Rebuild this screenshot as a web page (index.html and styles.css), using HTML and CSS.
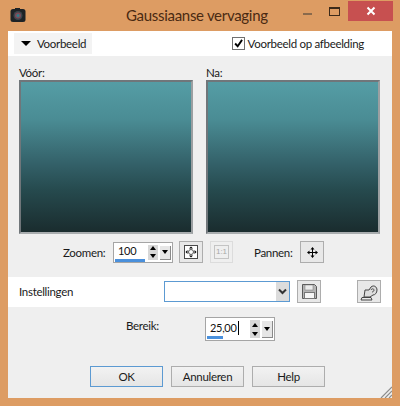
FILE: index.html
```html
<!DOCTYPE html>
<html lang="nl">
<head>
    <meta charset="UTF-8">
    <title>Gaussiaanse vervaging</title>
    <link rel="stylesheet" href="styles.css">
</head>
<body>
    <div class="window">
        <header class="titlebar">
            <svg class="app-icon" width="16" height="16" viewBox="0 0 16 16">
                <rect x="0.5" y="2" width="15" height="13" rx="2.5" fill="#1d2226"/>
                <rect x="5" y="1" width="5" height="2" fill="#1d2226"/>
                <circle cx="8" cy="8.5" r="4.5" fill="#3c454c"/>
                <circle cx="8" cy="8.5" r="3" fill="#7b4a58"/>
                <circle cx="8" cy="8.5" r="1.5" fill="#2f7c8c"/>
            </svg>
            <div class="title">Gaussiaanse vervaging</div>
            <div class="window-controls">
                <div class="win-btn"><span class="min-glyph"></span></div>
                <div class="win-btn"><span class="max-glyph"></span></div>
                <div class="win-close">
                    <svg width="10" height="10" viewBox="0 0 10 10"><path d="M1.5 1.5l7 7M8.5 1.5l-7 7" stroke="#fff" stroke-width="2"/></svg>
                </div>
            </div>
        </header>

        <main class="client">
            <div class="toolbar">
                <div class="section-toggle"><span class="arrow-down"></span>Voorbeeld</div>
                <label class="check-label">
                    <span class="checkbox">
                        <svg width="13" height="13" viewBox="0 0 13 13"><path d="M2.5 6.5l3 3.2 5.2-7.5" fill="none" stroke="#000" stroke-width="2.2"/></svg>
                    </span>
                    Voorbeeld op afbeelding
                </label>
            </div>

            <div class="previews">
                <div class="preview">
                    <div class="preview-label">Vóór:</div>
                    <div class="preview-frame"></div>
                </div>
                <div class="preview">
                    <div class="preview-label">Na:</div>
                    <div class="preview-frame"></div>
                </div>
            </div>

            <div class="zoom-row">
                <span class="zoom-label">Zoomen:</span>
                <div class="spin zoom-spin">
                    <span class="spin-value">100</span>
                    <span class="spin-bar zoom-bar"></span>
                    <span class="spin-arrows"><i class="tri-up"></i><i class="tri-down"></i></span>
                    <span class="spin-menu"><i class="tri-down"></i></span>
                </div>
                <button class="icon-btn fit-btn">
                    <svg width="16" height="16" viewBox="0 0 16 16">
                        <rect x="1.500" y="1.500" width="13" height="13" fill="#fff" stroke="#4a4a4a"/>
                        <circle cx="8" cy="8" r="2.500" fill="none" stroke="#555"/>
                        <path d="M8 2.500l2 2H6zM8 13.500l2-2H6zM2.500 8l2-2v4zM13.500 8l-2-2v4z" fill="#000"/>
                    </svg>
                </button>
                <button class="icon-btn one-btn"><span class="one-glyph">1:1</span></button>
                <span class="pan-label">Pannen:</span>
                <button class="icon-btn pan-btn">
                    <svg width="11" height="11" viewBox="0 0 11 11">
                        <path d="M5.5 0l2 2.5h-1.500v2.500h2.500v-1.500l2.500 2-2.500 2v-1.500h-2.500v2.500h1.500l-2 2.500-2-2.500h1.500v-2.500h-2.500v1.500l-2.500-2 2.500-2v1.500h2.500v-2.500h-1.500z" fill="#000"/>
                    </svg>
                </button>
            </div>

            <div class="settings-row">
                <span class="settings-label">Instellingen</span>
                <div class="combo">
                    <span class="combo-arrow">
                        <svg width="9" height="7" viewBox="0 0 9 7"><path d="M1 1.500l3.500 3.500 3.500-3.500" fill="none" stroke="#333" stroke-width="2"/></svg>
                    </span>
                </div>
                <button class="icon-btn save-btn">
                    <svg width="17" height="17" viewBox="0 0 17 17">
                        <path d="M1.500 1.500h12l2 2v12h-14z" fill="#b5b5b5" stroke="#5a5a5a"/>
                        <rect x="4" y="2" width="8" height="5" fill="#ececec" stroke="#777" stroke-width="0.500"/>
                        <rect x="3.500" y="9.500" width="10" height="6" fill="#f6f6f6" stroke="#777"/>
                    </svg>
                </button>
                <button class="icon-btn preset-btn">
                    <svg width="20" height="20" viewBox="0 0 20 20">
                        <path d="M3 15.500h9l1 2.500H2z" fill="#ececec" stroke="#444"/>
                        <path d="M5 15l1-7h4l2-3c3-2.500 6 0 6 3s-2 5-4 5l-3 2z" fill="#ddd" stroke="#444"/>
                        <path d="M12 8c1-2 3-1 3 0s-1 2-2 2" fill="none" stroke="#444"/>
                    </svg>
                </button>
            </div>

            <div class="range-row">
                <span class="range-label">Bereik:</span>
                <div class="spin range-spin">
                    <span class="spin-value">25,00<span class="caret"></span></span>
                    <span class="spin-bar range-bar"></span>
                    <span class="spin-arrows"><i class="tri-up"></i><i class="tri-down"></i></span>
                    <span class="spin-menu"><i class="tri-down"></i></span>
                </div>
            </div>

            <div class="button-row">
                <button class="button default">OK</button>
                <button class="button">Annuleren</button>
                <button class="button">Help</button>
            </div>

            <svg class="grip" width="12" height="12" viewBox="0 0 12 12">
                <path d="M12 1L1 12M12 5L5 12M12 9L9 12" stroke="#8d8d8d" stroke-width="1.200"/>
            </svg>
        </main>
    </div>
</body>
</html>
```

FILE: styles.css
```css
:root {
    --frame-color: #dd9c63;
    --panel-color: #efefef;
    --btn-border: #adadad;
    --focus-color: #5c9ad2;
    --text-color: #1a1a1a;
}

* {
    margin: 0;
    padding: 0;
    box-sizing: border-box;
}

html, body {
    width: 400px;
    height: 406px;
    overflow: hidden;
}

body {
    font-family: Lato, sans-serif;
    font-size: 11.500px;
    letter-spacing: -0.300px;
    color: var(--text-color);
    background-color: var(--frame-color);
}

.window {
    height: 406px;
    display: flex;
    flex-direction: column;
    padding: 0 8px 8px;
}

.titlebar {
    height: 31px;
    flex: none;
    display: flex;
    align-items: center;
    position: relative;
}

.app-icon {
    margin: 0 0 0 2px;
    position: relative;
    top: -1px;
}

.title {
    position: absolute;
    left: 118px;
    top: 4px;
    font-size: 15px;
    letter-spacing: -0.300px;
    line-height: 22px;
    color: #4a2a12;
}

.window-controls {
    margin-left: auto;
    display: flex;
    align-self: flex-start;
    margin-top: 1px;
    margin-right: -1px;
}

.win-btn {
    width: 27px;
    height: 20px;
    display: flex;
    align-items: center;
    justify-content: center;
}

.min-glyph {
    width: 9px;
    height: 2px;
    margin-top: 5px;
    background-color: #8a6a4c;
}

.max-glyph {
    width: 11px;
    height: 9px;
    border: 1px solid #3c2a1a;
    border-top-width: 2px;
}

.win-close {
    width: 45px;
    height: 20px;
    background-color: #c75050;
    display: flex;
    align-items: center;
    justify-content: center;
}

.client {
    flex: 1;
    background-color: var(--panel-color);
    position: relative;
    display: flex;
    flex-direction: column;
}

.toolbar {
    height: 25px;
    flex: none;
    background-color: white;
    display: flex;
    align-items: center;
    justify-content: space-between;
    padding: 0 28px 1px 6px;
}

.section-toggle {
    width: 78px;
    height: 21px;
    background-color: #f3f3f3;
    display: flex;
    align-items: center;
    padding-left: 7px;
    gap: 6px;
}

.arrow-down {
    width: 0;
    height: 0;
    border-left: 5px solid transparent;
    border-right: 5px solid transparent;
    border-top: 5px solid #000;
}

.check-label {
    display: flex;
    align-items: center;
    gap: 3px;
}

.checkbox {
    width: 13px;
    height: 13px;
    background-color: white;
    border: 1px solid #707070;
    display: flex;
    align-items: center;
    justify-content: center;
}

.previews {
    display: flex;
    gap: 13px;
    margin: 9px 0 0 11px;
}

.preview-label {
    height: 15px;
    line-height: 15px;
}

.preview-frame {
    width: 174px;
    height: 154px;
    border: 2px solid #70767a;
    border-right-color: #9b9fa1;
    border-bottom-color: #a9adaf;
    background: linear-gradient(#559da5 0%, #4a8c94 25%, #336068 55%, #264a4e 72%, #1a2c2e 100%);
}

.zoom-row {
    height: 22px;
    margin-top: 7px;
    display: flex;
    align-items: center;
    margin-left: 55px;
}

.zoom-label {
    width: 50px;
}

.spin {
    height: 21px;
    background-color: white;
    border: 1px solid #a5a5a5;
    display: flex;
    align-items: center;
    position: relative;
}

.zoom-spin {
    width: 60px;
}

.range-spin {
    width: 70px;
    height: 24px;
}

.spin-value {
    padding-left: 4px;
    margin-bottom: 3px;
    font-size: 11px;
    line-height: 14px;
    color: #111;
    display: inline-flex;
    align-items: center;
}

.caret {
    width: 1px;
    height: 14px;
    background-color: #000;
    margin-left: 1px;
}

.spin-bar {
    position: absolute;
    left: 1px;
    bottom: 0;
    height: 3px;
    background-color: #4a90dc;
}

.zoom-bar {
    width: 30px;
}

.range-bar {
    width: 16px;
    bottom: 1px;
}

.spin-arrows {
    position: absolute;
    right: 14px;
    top: 2px;
    width: 10px;
    bottom: 2px;
    display: flex;
    flex-direction: column;
    justify-content: space-around;
    align-items: center;
    background-color: #d8d8d8;
}

.spin-menu {
    position: absolute;
    right: 1px;
    top: 3px;
    bottom: 2px;
    width: 11px;
    background-color: #e6e6e6;
    border-right: 1px solid #8a8a8a;
    border-bottom: 1px solid #8a8a8a;
    display: flex;
    align-items: center;
    justify-content: center;
}

.tri-up, .tri-down {
    display: block;
    width: 0;
    height: 0;
    border-left: 3.500px solid transparent;
    border-right: 3.500px solid transparent;
}

.tri-up {
    border-bottom: 4px solid #000;
}

.tri-down {
    border-top: 4px solid #000;
}

.icon-btn {
    background-color: #e8e8e8;
    border: 1px solid var(--btn-border);
    display: flex;
    align-items: center;
    justify-content: center;
}

.fit-btn {
    width: 24px;
    height: 22px;
    margin-left: 6px;
}

.one-btn {
    width: 23px;
    height: 22px;
    margin-left: 7px;
    background-color: #efefef;
    border-color: #dcdcdc;
}

.one-glyph {
    font-size: 8px;
    line-height: 12px;
    width: 15px;
    border: 1px solid #c4c4c4;
    color: #a8a8a8;
    text-align: center;
}

.pan-label {
    width: 46px;
    margin-left: 21px;
}

.pan-btn {
    width: 24px;
    height: 22px;
}

.settings-row {
    height: 30px;
    flex: none;
    margin-top: 14px;
    background-color: white;
    display: flex;
    align-items: center;
    padding-left: 11px;
    padding-bottom: 1px;
}

.settings-label {
    width: 145px;
}

.combo {
    width: 126px;
    height: 21px;
    background-color: white;
    border: 1px solid var(--focus-color);
    position: relative;
}

.combo-arrow {
    position: absolute;
    right: 0;
    top: 0;
    bottom: 0;
    width: 13px;
    background-color: #dcdcdc;
    display: flex;
    align-items: center;
    justify-content: center;
}

.save-btn {
    width: 24px;
    height: 23px;
    margin-left: 7px;
}

.preset-btn {
    width: 24px;
    height: 23px;
    margin-left: 36px;
}

.range-row {
    height: 24px;
    margin-top: 10px;
    display: flex;
    align-items: center;
    padding-left: 118px;
}

.range-label {
    width: 79px;
    margin-top: -7px;
}

.button-row {
    display: flex;
    gap: 8px;
    margin: 25px 0 0 82px;
}

.button {
    width: 73px;
    height: 21px;
    font-family: inherit;
    font-size: 11.500px;
    letter-spacing: -0.300px;
    color: var(--text-color);
    background: linear-gradient(#f2f2f2, #e5e5e5);
    border: 1px solid var(--btn-border);
}

.button.default {
    border-color: var(--focus-color);
}

.grip {
    position: absolute;
    right: 0;
    bottom: 0;
}
```
